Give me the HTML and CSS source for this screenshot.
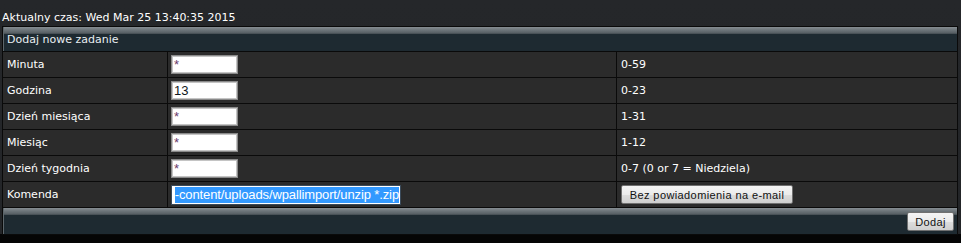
FILE: index.html
```html
<!DOCTYPE html>
<html lang="pl">
<head>
<meta charset="utf-8">
<title>Cron</title>
<link rel="stylesheet" href="styles.css">
</head>
<body>
<div class="clock">Aktualny czas: Wed Mar 25 13:40:35 2015</div>
<div class="panel">
  <div class="head">Dodaj nowe zadanie</div>

  <div class="cell label">Minuta</div>
  <div class="cell"><input class="small star" type="text" value="*"></div>
  <div class="cell hint">0-59</div>

  <div class="cell label">Godzina</div>
  <div class="cell"><input class="small" type="text" value="13"></div>
  <div class="cell hint">0-23</div>

  <div class="cell label">Dzień miesiąca</div>
  <div class="cell"><input class="small star" type="text" value="*"></div>
  <div class="cell hint">1-31</div>

  <div class="cell label">Miesiąc</div>
  <div class="cell"><input class="small star" type="text" value="*"></div>
  <div class="cell hint">1-12</div>

  <div class="cell label">Dzień tygodnia</div>
  <div class="cell"><input class="small star" type="text" value="*"></div>
  <div class="cell hint">0-7 (0 or 7 = Niedziela)</div>

  <div class="cell label">Komenda</div>
  <div class="cell"><div class="cmd"><span class="sel">-content/uploads/wpallimport/unzip *.zip</span></div></div>
  <div class="cell hint"><button class="btn wide" type="button">Bez powiadomienia na e-mail</button></div>

  <div class="foot"><button class="btn" type="button">Dodaj</button></div>
</div>
</body>
</html>
```
FILE: styles.css
```css
html {
  background: linear-gradient(to bottom, #25272a 0, #232528 234px, #050505 234px);
  min-height: 100%;
}
body {
  margin: 0;
  padding: 11px 0 0 2px;
  font-family: "DejaVu Sans", Verdana, sans-serif;
  font-size: 11px;
  color: #ffffff;
}
.clock {
  line-height: 13px;
  margin-bottom: 2px;
}
.panel {
  display: grid;
  grid-template-columns: 164px 448px 340px;
  gap: 1px;
  width: fit-content;
  background: #0a0a0a;
  border: 1px solid #0a0a0a;
}
.head,
.foot {
  grid-column: 1 / -1;
  background: linear-gradient(to bottom, #868d92 0, #6d757a 3px, #575f64 6px, #3c454b 7px, #1e2a31 7px, #1e2a31 100%);
  box-shadow: inset 1px 0 0 #5d666b;
}
.head {
  height: 24px;
  box-sizing: border-box;
  padding: 6px 0 0 4px;
  line-height: 14px;
  color: #e8eef2;
}
.foot {
  height: 26px;
  box-sizing: border-box;
  padding: 4px 3px 0 0;
  display: flex;
  justify-content: flex-end;
  align-items: flex-start;
}
.cell {
  background: #2b2b2b;
  height: 25px;
  display: flex;
  align-items: center;
  padding-left: 4px;
  line-height: 13px;
}
.cell:nth-child(3n+3) {
  padding-left: 3px;
}
.small {
  box-sizing: border-box;
  width: 67px;
  height: 19px;
  margin: 0;
  padding: 0 0 0 2px;
  border: 1px solid #8a8a8a;
  box-shadow: inset 0 0 0 1px #c4c4c4;
  background: #ffffff;
  font-family: "Liberation Sans", Arial, sans-serif;
  font-size: 13px;
  color: #101820;
  outline: none;
}
.star {
  color: #6a3a6a;
}
.cmd {
  box-sizing: border-box;
  width: 230px;
  height: 20px;
  border: 1px solid #3a4a5a;
  background: #ffffff;
  padding: 1px;
  overflow: hidden;
  white-space: nowrap;
  display: flex;
  justify-content: flex-end;
  font-family: "Liberation Sans", Arial, sans-serif;
  font-size: 13px;
  letter-spacing: -0.12px;
  line-height: 16px;
}
.sel {
  flex: none;
  background: #3399ff;
  color: #ffffff;
  height: 16px;
}
.btn {
  box-sizing: border-box;
  height: 19px;
  margin: 0;
  padding: 0 2px;
  border: 1px solid #707070;
  border-radius: 2px;
  background: linear-gradient(to bottom, #f4f4f4 0, #ebebeb 50%, #dddddd 51%, #cfcfcf 100%);
  font-family: "Liberation Sans", Arial, sans-serif;
  font-size: 11px;
  letter-spacing: 0.4px;
  line-height: 16px;
  white-space: nowrap;
  color: #111111;
}
.wide {
  width: 172px;
}
.foot .btn {
  width: 47px;
}
```
